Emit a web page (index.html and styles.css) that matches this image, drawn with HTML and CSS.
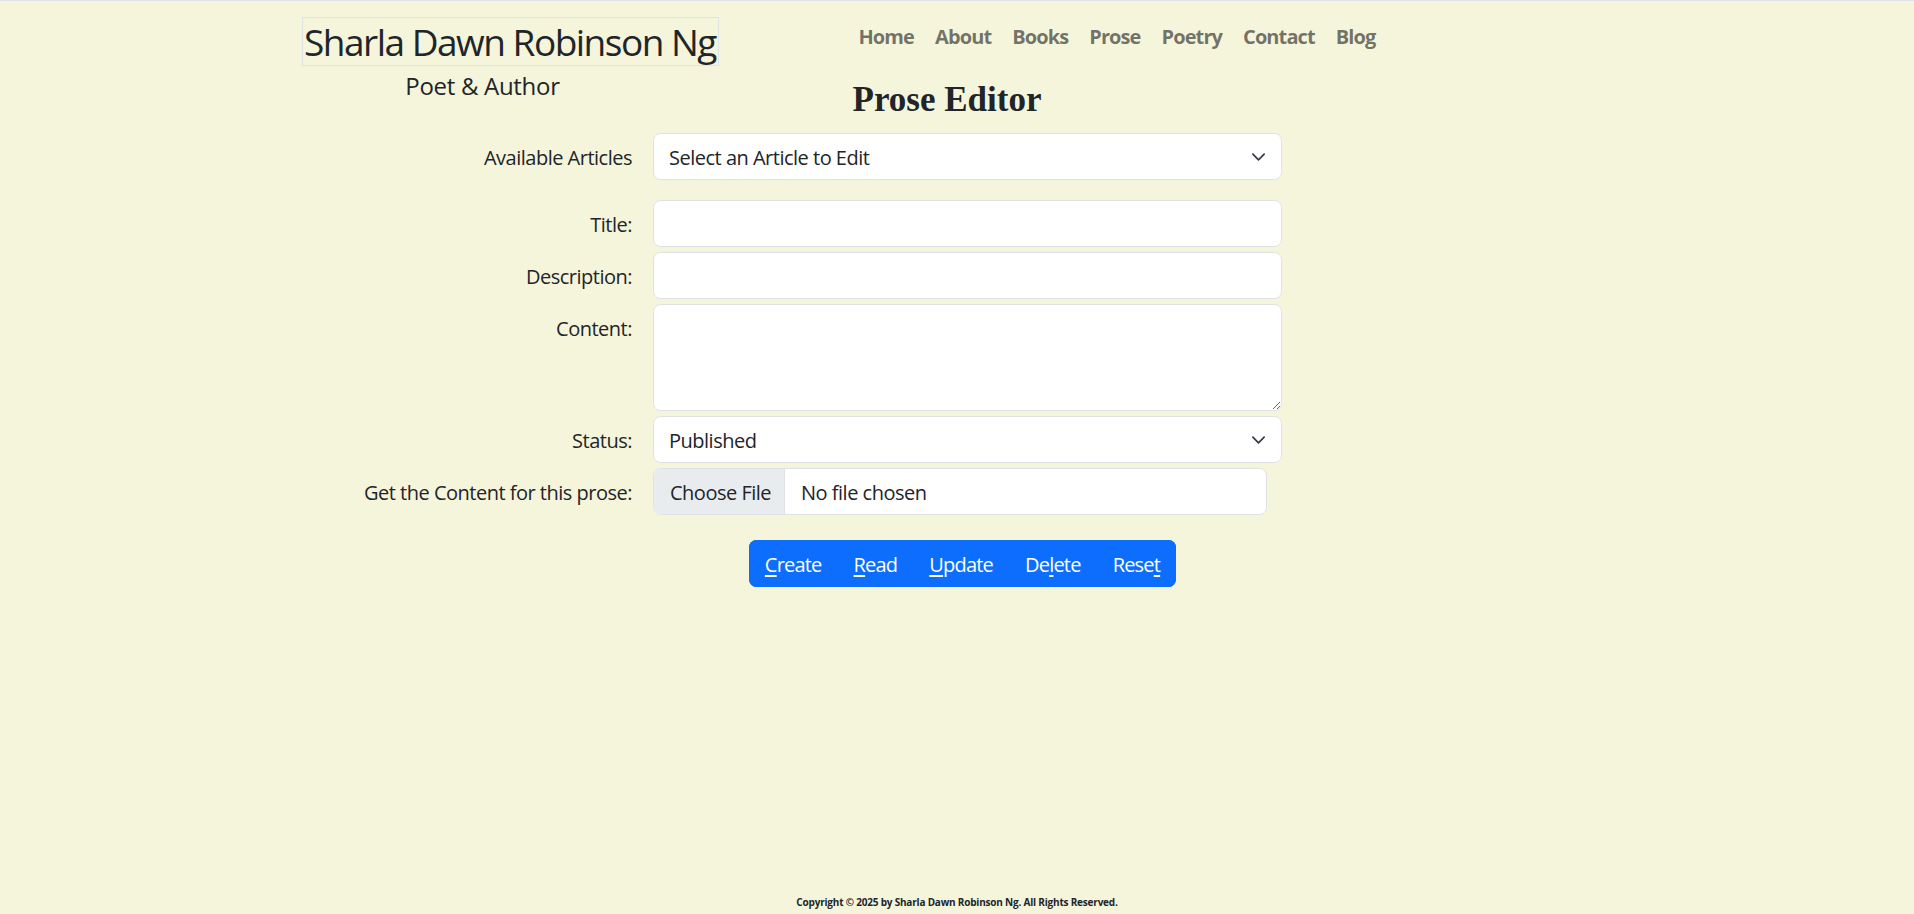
FILE: index.html
```html
<!DOCTYPE html>
<html lang="en">
<head>
<meta charset="utf-8">
<title>Prose Editor</title>
<link rel="stylesheet" href="styles.css">
</head>
<body>
<header class="site-header">
  <div class="brand">
    <div class="brand-name">Sharla Dawn Robinson Ng</div>
    <div class="brand-tag">Poet &amp; Author</div>
  </div>
  <nav class="main-nav">
    <a class="nav-link" href="#">Home</a>
    <a class="nav-link" href="#">About</a>
    <a class="nav-link" href="#">Books</a>
    <a class="nav-link" href="#">Prose</a>
    <a class="nav-link" href="#">Poetry</a>
    <a class="nav-link" href="#">Contact</a>
    <a class="nav-link" href="#">Blog</a>
  </nav>
</header>
<main class="editor">
  <h1 class="editor-title">Prose Editor</h1>
  <form class="editor-form">
    <label class="field-label first-row" for="articles">Available Articles</label>
    <div class="select-wrap first-row">
      <select id="articles" class="form-control form-select"><option>Select an Article to Edit</option></select>
      <svg class="chevron" viewBox="0 0 16 16" width="15" height="15"><path d="m2 5 6 6 6-6" fill="none" stroke="#343a40" stroke-width="1.8" stroke-linecap="round" stroke-linejoin="round"/></svg>
    </div>

    <label class="field-label" for="title">Title:</label>
    <input id="title" class="form-control" type="text">

    <label class="field-label" for="desc">Description:</label>
    <input id="desc" class="form-control" type="text">

    <label class="field-label" for="content">Content:</label>
    <textarea id="content" class="form-control content-area"></textarea>

    <label class="field-label" for="status">Status:</label>
    <div class="select-wrap">
      <select id="status" class="form-control form-select"><option>Published</option></select>
      <svg class="chevron" viewBox="0 0 16 16" width="15" height="15"><path d="m2 5 6 6 6-6" fill="none" stroke="#343a40" stroke-width="1.8" stroke-linecap="round" stroke-linejoin="round"/></svg>
    </div>

    <label class="field-label" for="file">Get the Content for this prose:</label>
    <input id="file" class="form-control file-input" type="file">
  </form>
  <div class="actions">
    <div class="btn-group">
      <button class="btn" type="button"><u>C</u>reate</button>
      <button class="btn" type="button"><u>R</u>ead</button>
      <button class="btn" type="button"><u>U</u>pdate</button>
      <button class="btn" type="button">De<u>l</u>ete</button>
      <button class="btn" type="button">Rese<u>t</u></button>
    </div>
  </div>
</main>
<footer class="site-footer">Copyright © 2025 by Sharla Dawn Robinson Ng. All Rights Reserved.</footer>
</body>
</html>
```

FILE: styles.css
```css
* { box-sizing: border-box; }

html, body { height: 100%; }

body {
  margin: 0;
  min-height: 100vh;
  display: flex;
  flex-direction: column;
  background: #f5f5dc;
  border-top: 1px solid #dfe2e6;
  color: #212529;
  font-family: "Open Sans", "Noto Sans", sans-serif;
  font-size: 20px;
  line-height: 1.5;
  letter-spacing: -0.5px;
}

.site-header {
  display: flex;
  align-items: flex-start;
  gap: 129px;
  height: 78px;
  padding: 16px 0 0 302px;
}

.brand { display: flex; flex-direction: column; }

.brand-name {
  border: 1px solid #dfe2e6;
  font-size: 37px;
  line-height: 47px;
  letter-spacing: -1.5px;
  padding: 0 2px 0 1px;
  white-space: nowrap;
}

.brand-tag {
  font-size: 24px;
  line-height: 36px;
  letter-spacing: -0.3px;
  margin-top: 2px;
  padding-right: 56px;
  text-align: center;
}

.main-nav { display: flex; }

.nav-link {
  padding: 0 10.5px;
  font-weight: 700;
  font-size: 20px;
  line-height: 40px;
  letter-spacing: -0.9px;
  color: rgba(0, 0, 0, .55);
  text-decoration: none;
}

.editor { display: flex; flex-direction: column; }

.editor-title {
  margin: 0 0 12px;
  padding-right: 20px;
  text-align: center;
  font-family: "Liberation Serif", "Times New Roman", serif;
  font-size: 35px;
  line-height: 42px;
  font-weight: 700;
  letter-spacing: 0;
}

.editor-form {
  display: grid;
  grid-template-columns: 1fr 629px 1fr;
  column-gap: 21px;
  row-gap: 5px;
  padding-left: 21px;
}

.field-label {
  grid-column: 1;
  text-align: right;
  padding-top: 9.5px;
  line-height: 30px;
}

.form-control {
  grid-column: 2;
  display: block;
  width: 100%;
  height: 47px;
  padding: 8.5px 15px 6.5px;
  font: inherit;
  font-size: 20px;
  line-height: 30px;
  letter-spacing: -0.5px;
  color: #212529;
  background: #fff;
  border: 1px solid #dee2e6;
  border-radius: 7.5px;
  outline: none;
}

.first-row { margin-bottom: 15px; }

.select-wrap { grid-column: 2; position: relative; }

.form-select { appearance: none; -webkit-appearance: none; padding-right: 45px; }

.chevron {
  position: absolute;
  right: 16px;
  top: 50%;
  transform: translateY(-50%);
  pointer-events: none;
}

.content-area { height: 107px; resize: vertical; }

.file-input { width: 614px; padding: 7.5px 15px; }

.file-input::file-selector-button {
  margin: -7.5px 16px -7.5px -15px;
  padding: 8.5px 13px 6.5px 16px;
  height: 45px;
  font: inherit;
  font-size: 20px;
  letter-spacing: -0.5px;
  color: #212529;
  background: #e9ecef;
  border: 0;
  border-right: 1px solid #dee2e6;
  border-radius: 0;
}

.actions {
  display: flex;
  justify-content: center;
  padding-left: 11px;
  margin-top: 25px;
}

.btn-group {
  display: flex;
  background: #0d6efd;
  border-radius: 7.5px;
  overflow: hidden;
}

.btn {
  height: 47px;
  padding: 8.5px 16px 6.5px;
  font: inherit;
  font-size: 20px;
  line-height: 30px;
  letter-spacing: -0.8px;
  color: #fff;
  background: #0d6efd;
  border: 0;
}

.btn u { text-underline-offset: 3px; }

.site-footer {
  margin-top: auto;
  padding-bottom: 4.5px;
  text-align: center;
  font-size: 10px;
  line-height: 15px;
  font-weight: 700;
  letter-spacing: -0.2px;
}
```
